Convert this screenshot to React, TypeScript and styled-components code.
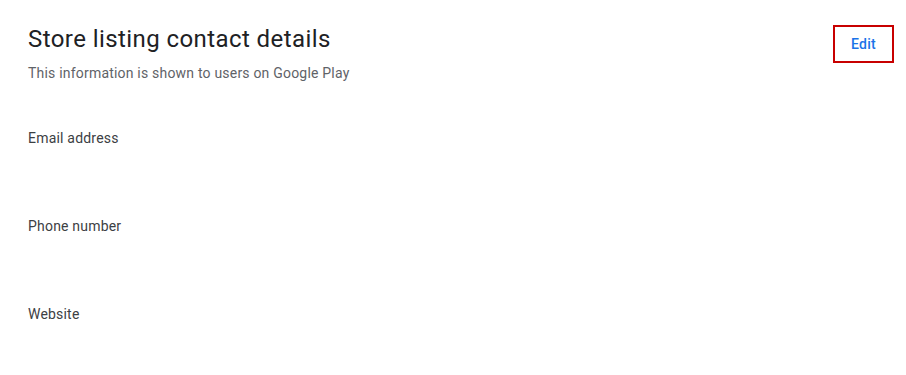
import React from "react";
import styled, { createGlobalStyle } from "styled-components";

const GlobalStyle = createGlobalStyle`
  body {
    margin: 0;
    background: #fff;
    font-family: Roboto, "Liberation Sans", Arial, sans-serif;
  }
`;

const Page = styled.div`
  padding: 23px 12px 0 28px;
`;

const Header = styled.div`
  display: flex;
  justify-content: space-between;
  align-items: flex-start;
`;

const Titles = styled.div`
  display: flex;
  flex-direction: column;
  gap: 8px;
`;

const Title = styled.h1`
  margin: 0;
  font-size: 24px;
  line-height: 32px;
  font-weight: 400;
  letter-spacing: 0.42px;
  color: #202124;
`;

const Subtitle = styled.p`
  margin: 0;
  font-size: 14px;
  line-height: 20px;
  letter-spacing: 0.2px;
  color: #5f6368;
`;

const EditButton = styled.button`
  margin-top: 2px;
  width: 61px;
  height: 38px;
  border: 2px solid #c80000;
  background: #fff;
  color: #1a73e8;
  font-family: Roboto, "Liberation Sans", Arial, sans-serif;
  font-size: 14px;
  font-weight: 500;
  letter-spacing: 0.25px;
  cursor: pointer;
`;

const Fields = styled.div`
  margin-top: 45px;
  display: flex;
  flex-direction: column;
`;

const Field = styled.div`
  height: 88px;
`;

const Label = styled.div`
  font-size: 14px;
  line-height: 20px;
  letter-spacing: 0.2px;
  color: #3c4043;
`;

const fields = ["Email address", "Phone number", "Website"];

export default function App() {
  return (
    <>
      <GlobalStyle />
      <Page>
        <Header>
          <Titles>
            <Title>Store listing contact details</Title>
            <Subtitle>This information is shown to users on Google Play</Subtitle>
          </Titles>
          <EditButton>Edit</EditButton>
        </Header>
        <Fields>
          {fields.map((f) => (
            <Field key={f}>
              <Label>{f}</Label>
            </Field>
          ))}
        </Fields>
      </Page>
    </>
  );
}
